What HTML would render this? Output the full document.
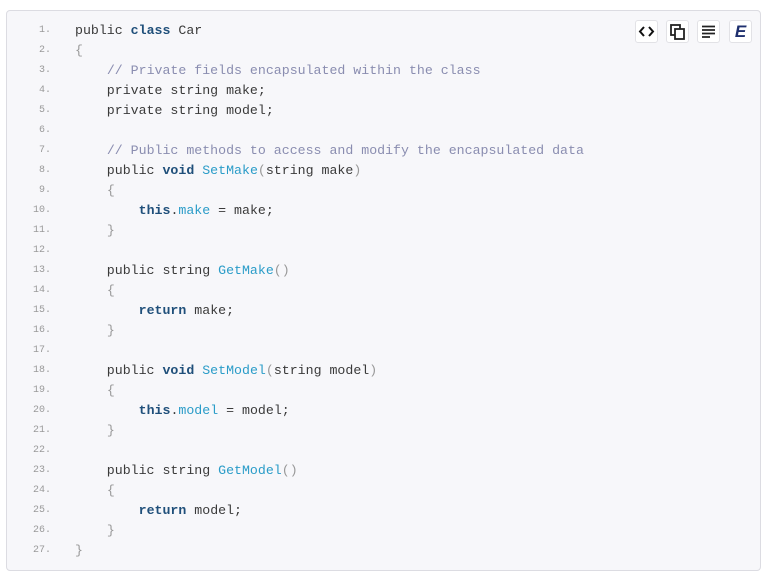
<!DOCTYPE html>
<html><head><style>
html,body{margin:0;padding:0;background:#fff;width:768px;height:580px;overflow:hidden}
.box{position:absolute;left:6px;top:10px;width:755px;height:561px;background:#f7f7fa;border:1px solid #dcdce2;border-radius:4px;box-sizing:border-box}
.ln{position:absolute;left:0;width:51px;text-align:right;font:10px "Liberation Mono",monospace;color:#9a9a9a}
.cd{position:absolute;left:75px;font:13.25px "Liberation Mono",monospace;color:#3a3a3a;white-space:pre}
.k{color:#1f4f7a;font-weight:bold}
.c{color:#8a8db0}
.m{color:#2a9cc8}
.p{color:#999}
.btn{position:absolute;top:20px;width:23px;height:23px;background:#fff;border:1px solid #e2e2e6;border-radius:3px;box-sizing:border-box}
</style></head><body>
<div class="box"></div>
<div id="code"></div>
<div class="btn" style="left:635px"><svg width="21" height="21" viewBox="0 0 21 21"><path d="M8 6 L4 10.5 L8 15 M13 6 L17 10.5 L13 15" stroke="#111" stroke-width="2" fill="none"/></svg></div>
<div class="btn" style="left:666px"><svg width="21" height="21" viewBox="0 0 21 21"><rect x="4" y="4" width="9" height="10" fill="none" stroke="#222" stroke-width="1.8"/><rect x="8" y="8" width="9" height="10" fill="#fff" stroke="#222" stroke-width="1.8"/></svg></div>
<div class="btn" style="left:697px"><svg width="21" height="21" viewBox="0 0 21 21"><path d="M4 5.5H17M4 9H17M4 12.5H17M4 16H12" stroke="#222" stroke-width="1.8"/></svg></div>
<div class="btn" style="left:729px;font:italic bold 17px 'Liberation Sans',sans-serif;color:#1e2f6e;text-align:center;line-height:21px">E</div>
<script>
var L=[
'public <span class="k">class</span> Car',
'<span class="p">{</span>',
'    <span class="c">// Private fields encapsulated within the class</span>',
'    private string make;',
'    private string model;',
'',
'    <span class="c">// Public methods to access and modify the encapsulated data</span>',
'    public <span class="k">void</span> <span class="m">SetMake</span><span class="p">(</span>string make<span class="p">)</span>',
'    <span class="p">{</span>',
'        <span class="k">this</span>.<span class="m">make</span> = make;',
'    <span class="p">}</span>',
'',
'    public string <span class="m">GetMake</span><span class="p">()</span>',
'    <span class="p">{</span>',
'        <span class="k">return</span> make;',
'    <span class="p">}</span>',
'',
'    public <span class="k">void</span> <span class="m">SetModel</span><span class="p">(</span>string model<span class="p">)</span>',
'    <span class="p">{</span>',
'        <span class="k">this</span>.<span class="m">model</span> = model;',
'    <span class="p">}</span>',
'',
'    public string <span class="m">GetModel</span><span class="p">()</span>',
'    <span class="p">{</span>',
'        <span class="k">return</span> model;',
'    <span class="p">}</span>',
'<span class="p">}</span>'];
var h='';
for(var i=0;i<L.length;i++){var y=30+20*i;
h+='<div class="ln" style="top:'+(y-5)+'px">'+(i+1)+'.</div>';
h+='<div class="cd" style="top:'+(y-7)+'px">'+L[i]+'</div>';}
document.getElementById('code').innerHTML=h;
</script>
</body></html>
